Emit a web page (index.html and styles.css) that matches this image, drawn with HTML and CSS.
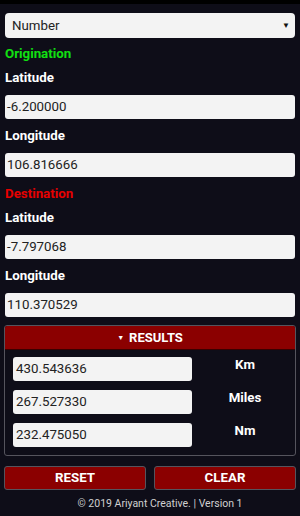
FILE: index.html
```html
<!DOCTYPE html>
<html>
<head>
<meta charset="utf-8">
<link rel="stylesheet" href="styles.css">
</head>
<body>
<div class="topbar"></div>
<div class="page">
  <div class="select">
    <span>Number</span>
    <span class="caret">&#9660;</span>
  </div>
  <div class="section green">Origination</div>
  <div class="label">Latitude</div>
  <div class="field">-6.200000</div>
  <div class="label">Longitude</div>
  <div class="field">106.816666</div>
  <div class="section red">Destination</div>
  <div class="label">Latitude</div>
  <div class="field">-7.797068</div>
  <div class="label">Longitude</div>
  <div class="field">110.370529</div>

  <div class="panel">
    <div class="panel-head"><span class="tri">&#9660;</span>RESULTS</div>
    <div class="panel-body">
      <div class="row"><div class="field rfield">430.543636</div><div class="unit">Km</div></div>
      <div class="row"><div class="field rfield">267.527330</div><div class="unit">Miles</div></div>
      <div class="row"><div class="field rfield">232.475050</div><div class="unit">Nm</div></div>
    </div>
  </div>

  <div class="buttons">
    <div class="btn">RESET</div>
    <div class="btn">CLEAR</div>
  </div>
  <div class="footer">© 2019 Ariyant Creative. | Version 1</div>
</div>
</body>
</html>
```
FILE: styles.css
```css
html, body {
  margin: 0;
  padding: 0;
  background: #0e0d18;
  font-family: Roboto, "Liberation Sans", sans-serif;
  color: #fff;
}
.topbar {
  height: 4px;
  background: #000;
}
.page {
  padding: 0 5px;
}
.select {
  margin-top: 9px;
  height: 25px;
  box-sizing: border-box;
  background: #f3f3f3;
  border-radius: 4px;
  display: flex;
  align-items: center;
  justify-content: space-between;
  padding: 0 5px 0 7px;
  color: #222;
  font-size: 13.3px;
}
.caret {
  font-size: 8px;
  color: #111;
}
.section {
  margin-top: 4px;
  line-height: 24px;
  font-size: 13.3px;
  font-weight: bold;
}
.green { color: #11e011; }
.red { color: #e60000; }
.label {
  line-height: 24px;
  font-size: 13.3px;
  font-weight: bold;
  color: #fff;
}
.field {
  margin: 5px 0;
  height: 24px;
  line-height: 24px;
  box-sizing: border-box;
  background: #f3f3f3;
  border-radius: 3px;
  padding: 0 2px;
  color: #222;
  font-size: 13.3px;
}
.panel {
  margin: 8px -1px 0;
  border: 1px solid #55545d;
  border-radius: 3px;
  overflow: hidden;
}
.panel-head {
  height: 23px;
  line-height: 23px;
  background: #8b0000;
  text-align: center;
  font-size: 13px;
  font-weight: bold;
  border-bottom: 1px solid #3a0000;
}
.tri {
  font-size: 7px;
  vertical-align: 2px;
  margin-right: 5px;
}
.panel-body {
  padding: 7px 0 8px 8px;
  display: flex;
  flex-direction: column;
  gap: 9px;
}
.row {
  display: flex;
  align-items: flex-start;
}
.rfield {
  margin: 0;
  width: 179px;
  padding: 0 3px;
}
.unit {
  flex: 1;
  margin-left: 3px;
  text-align: center;
  font-size: 13.3px;
  font-weight: bold;
  line-height: 16px;
}
.buttons {
  margin: 10px -1px 0;
  display: flex;
  gap: 8px;
}
.btn {
  flex: 1;
  height: 24px;
  line-height: 22px;
  box-sizing: border-box;
  background: #8b0000;
  border: 1px solid #55545d;
  border-radius: 3px;
  text-align: center;
  font-size: 13.3px;
  font-weight: bold;
}
.footer {
  text-align: center;
  font-size: 10.5px;
  color: #d0d0d0;
  line-height: 28px;
  padding-left: 20px;
}
```
